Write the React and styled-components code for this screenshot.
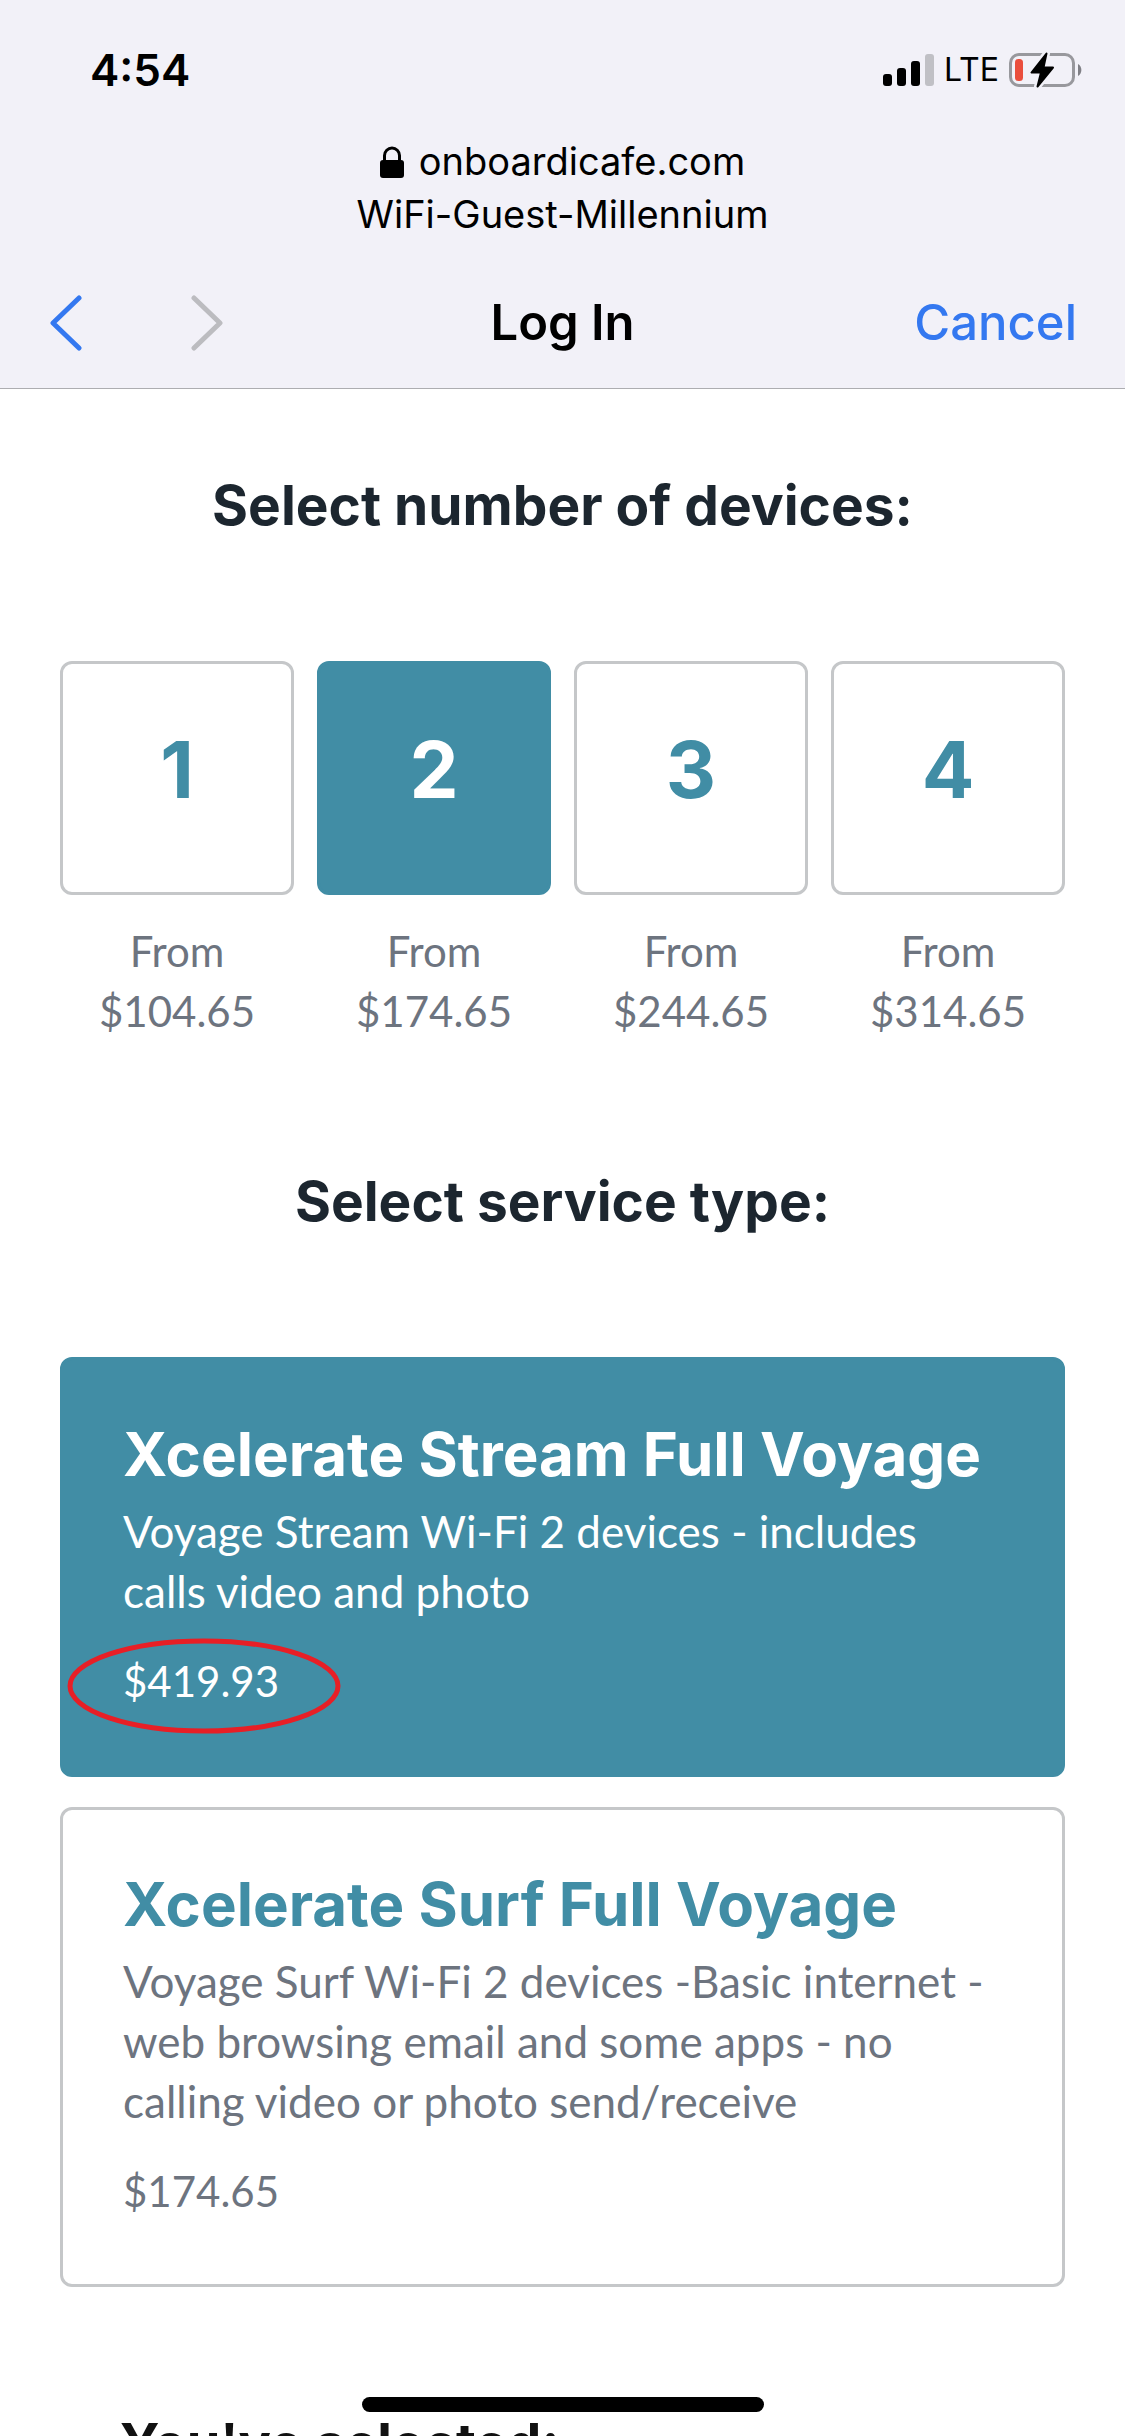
import { useState } from 'react'
import styled, { createGlobalStyle } from 'styled-components'

const colors = {
  teal: '#418da5',
  blue: '#3478f0',
  chrome: '#f2f1f8',
  ink: '#1c262f',
  muted: '#6d747f',
  border: '#c5c7c9',
}

const fonts = {
  display: "Inter, 'Liberation Sans', sans-serif",
  body: "Lato, 'Liberation Sans', sans-serif",
}

const GlobalStyle = createGlobalStyle`
  * {
    box-sizing: border-box;
  }

  body {
    margin: 0;
    background-color: #fff;
  }

  button {
    font: inherit;
    cursor: pointer;
  }
`

const Screen = styled.div`
  display: flex;
  flex-direction: column;
  height: 100vh;
  overflow: hidden;
  font-family: ${fonts.body};
`

const Header = styled.header`
  flex: none;
  background-color: ${colors.chrome};
  border-bottom: 1px solid #adadb1;
  color: #000;
  font-family: ${fonts.display};
`

const StatusBar = styled.div`
  display: flex;
  justify-content: space-between;
  align-items: center;
  height: 135px;
  padding: 4px 42px 0 90px;
`

const Time = styled.time`
  font-size: 44px;
  font-weight: 600;
`

const StatusIcons = styled.div`
  display: flex;
  align-items: center;
  gap: 10px;
  font-size: 32px;
`

const Site = styled.div`
  display: flex;
  flex-direction: column;
  align-items: center;
  padding-bottom: 16px;
  font-size: 38px;
  line-height: 53px;
`

const Domain = styled.div`
  display: flex;
  align-items: center;
  gap: 15px;
`

const NavBar = styled.nav`
  display: grid;
  grid-template-columns: 1fr auto 1fr;
  align-items: center;
  height: 131px;
  padding: 0 48px;
  font-size: 49px;
`

const NavArrows = styled.div`
  display: flex;
  gap: 108px;
`

const NavButton = styled.button`
  display: flex;
  padding: 0;
  border: 0;
  background: none;
  color: ${colors.blue};

  &:disabled {
    color: #bcbcc0;
    cursor: default;
  }
`

const NavTitle = styled.h1`
  margin: 0;
  font-size: inherit;
  font-weight: 600;
`

const CancelButton = styled(NavButton)`
  justify-self: end;
  font-weight: 500;
`

const Content = styled.main`
  flex: 1;
  min-height: 0;
  padding: 80px 60px;
  overflow-y: auto;
  scrollbar-width: none;
`

const Heading = styled.h2`
  margin: 0 0 120px;
  color: ${colors.ink};
  font-family: ${fonts.display};
  font-size: 55px;
  font-weight: 700;
  line-height: 72px;
  text-align: center;
`

const Devices = styled.div`
  display: grid;
  grid-template-columns: repeat(4, 1fr);
  gap: 23px;
  margin-bottom: 124px;
`

const Device = styled.div`
  color: ${colors.muted};
  font-size: 42px;
  line-height: 60px;
  text-align: center;
`

const DeviceButton = styled.button`
  display: block;
  width: 100%;
  aspect-ratio: 1;
  margin-bottom: 26px;
  padding: 0 0 16px;
  border: 3px solid ${(props) => (props.$active ? colors.teal : colors.border)};
  border-radius: 12px;
  background-color: ${(props) => (props.$active ? colors.teal : '#fff')};
  color: ${(props) => (props.$active ? '#fff' : colors.teal)};
  font-family: ${fonts.display};
  font-size: 78px;
  font-weight: 700;
`

const Services = styled.div`
  display: grid;
  gap: 30px;
`

const ServiceCard = styled.button`
  display: block;
  width: 100%;
  padding: 60px 60px 63px;
  border: 3px solid ${(props) => (props.$active ? colors.teal : colors.border)};
  border-radius: 12px;
  background-color: ${(props) => (props.$active ? colors.teal : '#fff')};
  color: ${(props) => (props.$active ? '#fff' : colors.muted)};
  font-size: 42px;
  line-height: 60px;
  text-align: left;
`

const ServiceName = styled.span`
  display: block;
  margin-bottom: 13px;
  color: ${(props) => (props.$active ? '#fff' : colors.teal)};
  font-family: ${fonts.display};
  font-size: 60px;
  font-weight: 700;
  line-height: 68px;
`

const ServiceText = styled.span`
  display: block;
  margin-bottom: 30px;
  font-size: 44px;
`

const Price = styled.span`
  display: inline-block;
  position: relative;
  vertical-align: top;
`

const Circle = styled.svg`
  position: absolute;
  top: -13px;
  left: -56px;
  overflow: visible;
`

const Selected = styled.h2`
  margin: 120px 60px 0;
  color: #111;
  font-family: ${fonts.display};
  font-size: 54px;
  font-weight: 700;
  line-height: 72px;
`

const HomeIndicator = styled.div`
  position: fixed;
  bottom: 24px;
  left: 50%;
  width: 402px;
  height: 15px;
  border-radius: 8px;
  background-color: #000;
  transform: translateX(-50%);
`

const devices = [
  { count: 1, price: '$104.65' },
  { count: 2, price: '$174.65' },
  { count: 3, price: '$244.65' },
  { count: 4, price: '$314.65' },
]

const services = [
  {
    id: 'stream',
    name: 'Xcelerate Stream Full Voyage',
    text: 'Voyage Stream Wi-Fi 2 devices - includes calls video and photo',
    price: '$419.93',
    circled: true,
  },
  {
    id: 'surf',
    name: 'Xcelerate Surf Full Voyage',
    text: 'Voyage Surf Wi-Fi 2 devices -Basic internet - web browsing email and some apps - no calling video or photo send/receive',
    price: '$174.65',
  },
]

function SignalIcon() {
  return (
    <svg width="51" height="32" viewBox="0 0 51 32" aria-hidden="true">
      <rect x="0" y="20" width="9" height="12" rx="3" />
      <rect x="14" y="14" width="9" height="18" rx="3" />
      <rect x="28" y="7" width="9" height="25" rx="3" />
      <rect x="42" y="0" width="9" height="32" rx="3" fill="#c0c0c5" />
    </svg>
  )
}

function BatteryIcon() {
  return (
    <svg width="74" height="36" viewBox="0 0 74 36" aria-hidden="true">
      <rect
        x="1.5"
        y="2.5"
        width="63"
        height="31"
        rx="8.5"
        fill="none"
        stroke="#98989d"
        strokeWidth="3"
      />
      <rect x="6" y="7" width="8" height="22" rx="3.5" fill="#ea4e3d" />
      <path d="M69 12a7 7 0 0 1 0 12z" fill="#808086" />
      <path
        d="M37.500 1.500 22.500 20.500H32L28.500 34.500 44 15.500H34.500z"
        stroke={colors.chrome}
        strokeWidth="7"
        strokeLinejoin="round"
      />
      <path
        d="M37.500 1.500 22.500 20.500H32L28.500 34.500 44 15.500H34.500z"
        stroke="#000"
        strokeWidth="2"
        strokeLinejoin="round"
      />
    </svg>
  )
}

function LockIcon() {
  return (
    <svg width="24" height="32" viewBox="0 0 24 32" aria-hidden="true">
      <path
        d="M4.500 15V9.500a7.500 7.500 0 0 1 15 0V15"
        fill="none"
        stroke="#000"
        strokeWidth="3"
      />
      <rect x="0" y="14" width="24" height="18" rx="3" />
    </svg>
  )
}

function ArrowIcon({ points }) {
  return (
    <svg width="34" height="56" viewBox="0 0 34 56" aria-hidden="true">
      <polyline
        points={points}
        fill="none"
        stroke="currentColor"
        strokeWidth="5"
        strokeLinecap="round"
        strokeLinejoin="round"
      />
    </svg>
  )
}

export default function App() {
  const [deviceCount, setDeviceCount] = useState(2)
  const [service, setService] = useState('stream')

  return (
    <Screen>
      <GlobalStyle />
      <Header>
        <StatusBar>
          <Time>4:54</Time>
          <StatusIcons>
            <SignalIcon />
            LTE
            <BatteryIcon />
          </StatusIcons>
        </StatusBar>
        <Site>
          <Domain>
            <LockIcon />
            onboardicafe.com
          </Domain>
          <div>WiFi-Guest-Millennium</div>
        </Site>
        <NavBar>
          <NavArrows>
            <NavButton type="button" aria-label="Back">
              <ArrowIcon points="31,3 5,28 31,53" />
            </NavButton>
            <NavButton type="button" aria-label="Forward" disabled>
              <ArrowIcon points="4,3 30,28 4,53" />
            </NavButton>
          </NavArrows>
          <NavTitle>Log In</NavTitle>
          <CancelButton type="button">Cancel</CancelButton>
        </NavBar>
      </Header>

      <Content>
        <Heading>Select number of devices:</Heading>
        <Devices>
          {devices.map(({ count, price }) => (
            <Device key={count}>
              <DeviceButton
                type="button"
                $active={count === deviceCount}
                aria-pressed={count === deviceCount}
                onClick={() => setDeviceCount(count)}
              >
                {count}
              </DeviceButton>
              <div>From</div>
              <div>{price}</div>
            </Device>
          ))}
        </Devices>

        <Heading>Select service type:</Heading>
        <Services>
          {services.map(({ id, name, text, price, circled }) => (
            <ServiceCard
              key={id}
              type="button"
              $active={id === service}
              aria-pressed={id === service}
              onClick={() => setService(id)}
            >
              <ServiceName $active={id === service}>{name}</ServiceName>
              <ServiceText>{text}</ServiceText>
              <Price>
                {price}
                {circled && (
                  <Circle width="274" height="96" aria-hidden="true">
                    <ellipse
                      cx="137"
                      cy="48"
                      rx="134"
                      ry="45"
                      fill="none"
                      stroke="#e71f26"
                      strokeWidth="5"
                    />
                  </Circle>
                )}
              </Price>
            </ServiceCard>
          ))}
        </Services>
        <Selected>You've selected:</Selected>
      </Content>
      <HomeIndicator />
    </Screen>
  )
}
